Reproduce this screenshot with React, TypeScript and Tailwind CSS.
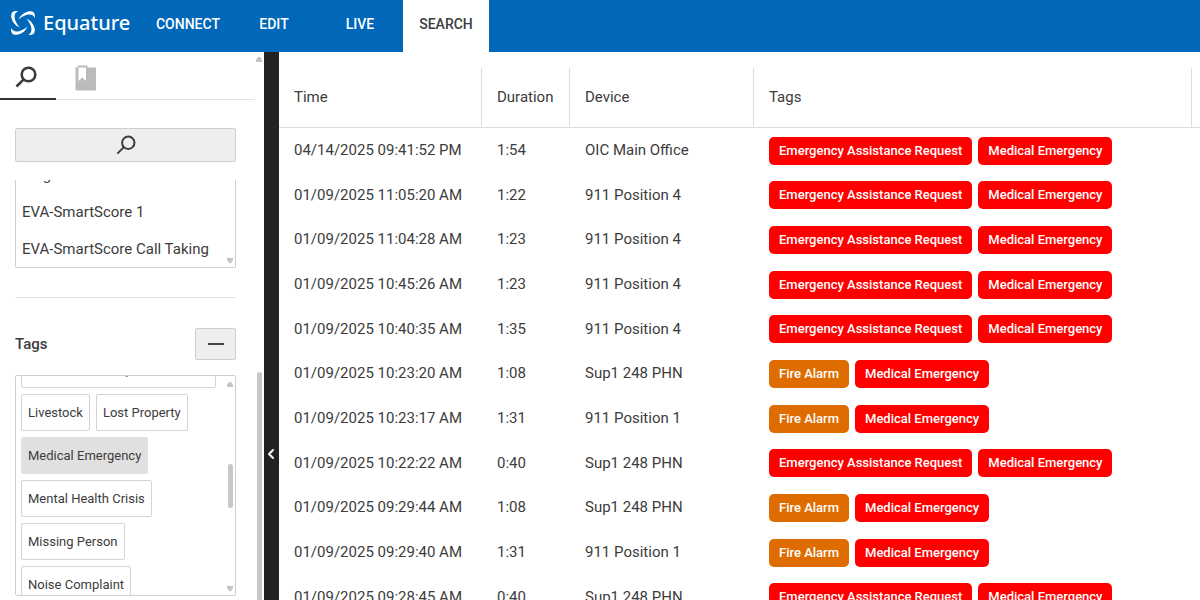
import { useState } from "react";
import { ChevronLeft } from "lucide-react";
import clsx from "clsx";

const navItems = ["CONNECT", "EDIT", "LIVE", "SEARCH"];

const forms = ["Single Call", "EVA-SmartScore 1", "EVA-SmartScore Call Taking"];

const tagNames = [
  "Intoxicated or Impaired Student",
  "Livestock",
  "Lost Property",
  "Medical Emergency",
  "Mental Health Crisis",
  "Missing Person",
  "Noise Complaint",
];

const assistance = "Emergency Assistance Request";
const medical = "Medical Emergency";
const fire = "Fire Alarm";

const calls = [
  { time: "04/14/2025 09:41:52 PM", duration: "1:54", device: "OIC Main Office", tags: [assistance, medical] },
  { time: "01/09/2025 11:05:20 AM", duration: "1:22", device: "911 Position 4", tags: [assistance, medical] },
  { time: "01/09/2025 11:04:28 AM", duration: "1:23", device: "911 Position 4", tags: [assistance, medical] },
  { time: "01/09/2025 10:45:26 AM", duration: "1:23", device: "911 Position 4", tags: [assistance, medical] },
  { time: "01/09/2025 10:40:35 AM", duration: "1:35", device: "911 Position 4", tags: [assistance, medical] },
  { time: "01/09/2025 10:23:20 AM", duration: "1:08", device: "Sup1 248 PHN", tags: [fire, medical] },
  { time: "01/09/2025 10:23:17 AM", duration: "1:31", device: "911 Position 1", tags: [fire, medical] },
  { time: "01/09/2025 10:22:22 AM", duration: "0:40", device: "Sup1 248 PHN", tags: [assistance, medical] },
  { time: "01/09/2025 09:29:44 AM", duration: "1:08", device: "Sup1 248 PHN", tags: [fire, medical] },
  { time: "01/09/2025 09:29:40 AM", duration: "1:31", device: "911 Position 1", tags: [fire, medical] },
  { time: "01/09/2025 09:28:45 AM", duration: "0:40", device: "Sup1 248 PHN", tags: [assistance, medical] },
];

function Logo() {
  const blade =
    "M7 0.2C2-0.5-0.8 1.5 0.5 7C1.6 11.5 4.5 14.8 8.6 16.6C6 13.5 4.6 10.8 3.8 7.8C3.1 4 4 1.5 7 0.2Z";
  return (
    <svg viewBox="0 0 24 24" className="size-6" fill="currentColor" aria-hidden="true">
      {[0, 90, 180, 270].map((angle) => (
        <path key={angle} d={blade} transform={`rotate(${angle} 12 12)`} />
      ))}
    </svg>
  );
}

function SearchIcon({ className }: { className: string }) {
  return (
    <svg viewBox="0 0 22 22" className={className} fill="none" stroke="currentColor" aria-hidden="true">
      <circle cx="13.5" cy="8.5" r="6.8" />
      <path d="M8.7 13.3L1.5 20.5" />
    </svg>
  );
}

function BookmarkIcon() {
  return (
    <svg viewBox="0 0 22 26" className="h-[26px] w-[22px]" aria-hidden="true">
      <path fill="#bbb" d="M2.5 0.5H12.5V2.5H21V25.5H0.5V2.5H2.5Z" />
      <path fill="#fff" d="M3.5 2.5H11V16L7.2 12.5L3.5 16Z" />
    </svg>
  );
}

function Arrow({ up, className }: { up?: boolean; className: string }) {
  return (
    <svg viewBox="0 0 6 5" className={clsx("absolute h-[5px] w-[6px]", className)} aria-hidden="true">
      <path fill="#c4c4c4" d={up ? "M2 0H4L6 3V5H0V3Z" : "M2 5H4L6 2V0H0V2Z"} />
    </svg>
  );
}

export default function App() {
  const [activeNav, setActiveNav] = useState("SEARCH");
  const [selectedTag, setSelectedTag] = useState(medical);

  return (
    <div className="flex h-screen flex-col overflow-hidden bg-white font-[Roboto,sans-serif] text-[15px] text-[#3c3c3c]">
      <header className="flex h-[52px] shrink-0 bg-[#0067b9] text-white">
        <a href="#" className="flex w-[145px] items-center gap-2 pb-1.5 pl-[11px]">
          <Logo />
          <span className="font-['Noto_Sans',sans-serif] text-xl leading-6 font-medium">Equature</span>
        </a>
        <nav className="flex">
          {navItems.map((item) => (
            <button
              key={item}
              type="button"
              onClick={() => setActiveNav(item)}
              className={clsx(
                "w-[86px] pb-1 text-sm font-medium",
                item === activeNav && "bg-white text-[#3c3c3c]",
              )}
            >
              {item}
            </button>
          ))}
        </nav>
      </header>

      <div className="flex min-h-0 flex-1">
        <aside className="relative w-[264px] shrink-0 overflow-hidden">
          <div className="mr-[9px] flex h-12 border-b border-[#e2e2e2]">
            <button type="button" aria-label="Search" className="-mb-px flex w-14 items-center justify-center border-b-2 border-[#333] pt-1 pr-1">
              <SearchIcon className="size-[22px] stroke-[2.6]" />
            </button>
            <button type="button" aria-label="Saved" className="flex w-[60px] items-center justify-center pt-1">
              <BookmarkIcon />
            </button>
          </div>

          <div className="mr-7 ml-[15px] flex flex-col pt-7">
            <button
              type="button"
              aria-label="Run search"
              className="flex h-[34px] items-center justify-center rounded-xs border border-[#cfcfcf] bg-[#eee]"
            >
              <SearchIcon className="size-5 stroke-[2.2]" />
            </button>

            <div className="relative mt-[18px] flex h-[88px] flex-col justify-end overflow-hidden rounded-b-xs border border-t-0 border-[#cfcfcf]">
              <ul className="-mb-px shrink-0 px-1.5">
                {forms.map((form) => (
                  <li key={form} className="h-[37px] leading-[37px] whitespace-nowrap">
                    {form}
                  </li>
                ))}
              </ul>
              <Arrow className="right-0.5 bottom-1" />
            </div>

            <hr className="mt-[29px] border-[#e2e2e2]" />

            <div className="mt-[30px] flex items-center justify-between">
              <h2 className="font-medium">Tags</h2>
              <button
                type="button"
                aria-label="Collapse tags"
                className="flex h-8 w-[41px] items-center justify-center rounded-xs border border-[#cfcfcf] bg-[#eee]"
              >
                <span className="h-0.5 w-4 bg-[#444]" />
              </button>
            </div>

            <div className="relative mt-[15px] flex h-[221px] flex-col justify-end overflow-hidden rounded-xs border border-[#cfcfcf]">
              <div className="-mb-2 flex shrink-0 flex-wrap gap-1.5 pr-3.5 pl-[5px]">
                {tagNames.map((tag) => (
                  <button
                    key={tag}
                    type="button"
                    onClick={() => setSelectedTag(tag)}
                    aria-pressed={tag === selectedTag}
                    className={clsx(
                      "h-[37px] rounded-xs border px-1.5 text-[13px] whitespace-nowrap",
                      tag === selectedTag ? "border-[#e0e0e0] bg-[#e0e0e0]" : "border-[#d4d4d4] bg-white",
                    )}
                  >
                    {tag}
                  </button>
                ))}
              </div>
              <Arrow up className="top-1.5 right-0.5" />
              <span className="absolute top-[88px] right-0.5 h-11 w-[5px] rounded-full bg-[#c8c8c8]" />
              <Arrow className="right-0.5 bottom-1" />
            </div>
          </div>

          <Arrow up className="top-[5px] right-0.5" />
          <span className="absolute top-80 right-0.5 -bottom-2 w-[5px] rounded-full bg-[#c8c8c8]" />
        </aside>

        <button
          type="button"
          aria-label="Hide panel"
          className="flex w-[15px] shrink-0 items-center justify-center bg-[#222] pt-[255px] pr-0.5 text-white"
        >
          <ChevronLeft className="size-4 shrink-0" strokeWidth={3} />
        </button>

        <main className="min-w-0 flex-1 overflow-hidden pt-4">
          <table className="w-full table-fixed border-separate border-spacing-0 text-left">
            <colgroup>
              <col className="w-[203px]" />
              <col className="w-[88px]" />
              <col className="w-[184px]" />
              <col />
              <col className="w-2" />
            </colgroup>
            <thead>
              <tr className="h-[60px]">
                {["Time", "Duration", "Device", "Tags"].map((name) => (
                  <th key={name} scope="col" className="border-r border-b border-[#ddd] px-[15px] font-normal">
                    {name}
                  </th>
                ))}
                <td className="border-b border-[#ddd]" />
              </tr>
            </thead>
            <tbody>
              {calls.map((call) => (
                <tr key={call.time} className="h-[45px] nth-[3n+2]:h-11">
                  <td className="px-[15px] whitespace-nowrap">{call.time}</td>
                  <td className="px-[15px]">{call.duration}</td>
                  <td className="px-[15px] whitespace-nowrap">{call.device}</td>
                  <td className="px-[15px]">
                    <div className="flex gap-1.5">
                      {call.tags.map((tag) => (
                        <span
                          key={tag}
                          className={clsx(
                            "rounded-[5px] px-2.5 text-[13px] leading-7 font-medium whitespace-nowrap text-white",
                            tag === fire ? "bg-[#df6c00]" : "bg-[#fe0000]",
                          )}
                        >
                          {tag}
                        </span>
                      ))}
                    </div>
                  </td>
                  <td />
                </tr>
              ))}
            </tbody>
          </table>
        </main>
      </div>
    </div>
  );
}
